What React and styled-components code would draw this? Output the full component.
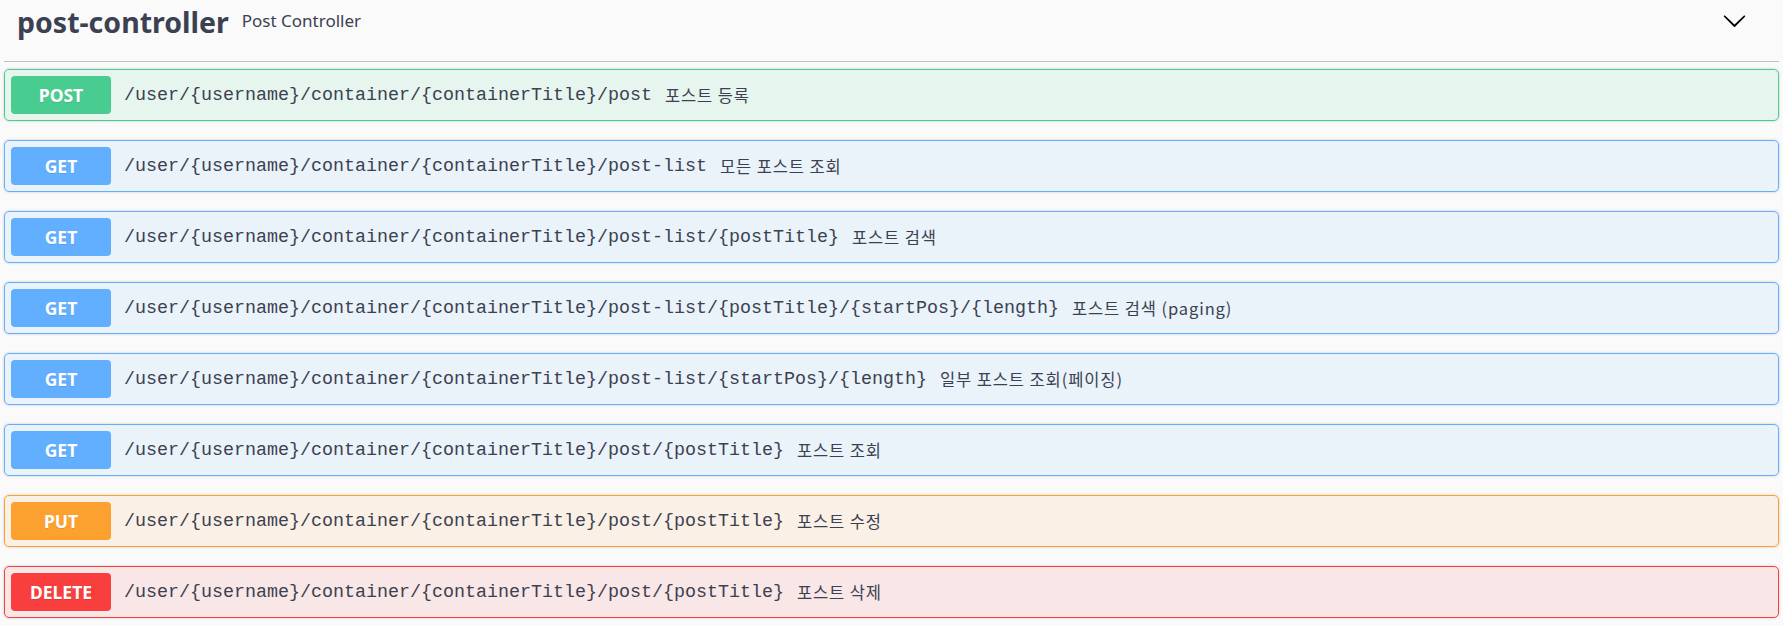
import React from "react";
import styled, { createGlobalStyle } from "styled-components";

const GlobalStyle = createGlobalStyle`
  html, body { margin: 0; padding: 0; background: #fafafa; }
  body { font-family: "Noto Sans", "Noto Sans CJK KR", sans-serif; color: #3b4151; }
  * { box-sizing: border-box; }
`;

const METHODS = {
  post: { color: "#49cc90", bg: "rgba(73,204,144,.1)" },
  get: { color: "#61affe", bg: "rgba(97,175,254,.1)" },
  put: { color: "#fca130", bg: "rgba(252,161,48,.1)" },
  delete: { color: "#f93e3e", bg: "rgba(249,62,62,.1)" },
};

const Wrapper = styled.div`
  padding: 0 4px;
`;

const TagHeader = styled.div`
  display: flex;
  align-items: flex-start;
  height: 62px;
  padding: 3px 32px 0 13px;
  border-bottom: 1px solid rgba(59, 65, 81, 0.3);
  margin-bottom: 7px;
`;

const TagTitle = styled.h3`
  margin: 0;
  font-family: "Noto Sans", sans-serif;
  font-weight: 700;
  font-size: 28.5px;
  line-height: 39px;
  color: #3b4151;
`;

const TagSmall = styled.small`
  flex: 1;
  padding: 0 13px;
  margin-top: 6px;
  font-family: "Noto Sans", sans-serif;
  font-size: 17px;
  line-height: 23px;
  font-weight: 400;
  color: #3b4151;
`;

const Arrow = styled.svg`
  width: 25px;
  height: 25px;
  margin-top: 4.6px;
  flex: none;
`;

const OpBlock = styled.div`
  display: flex;
  align-items: center;
  height: 52px;
  padding: 0 6px;
  margin-bottom: 19px;
  border: 1px solid ${(p) => METHODS[p.$method].color};
  background: ${(p) => METHODS[p.$method].bg};
  border-radius: 5px;
  box-shadow: 0 0 3px rgba(0, 0, 0, 0.19);
`;

const Method = styled.span`
  flex: none;
  display: flex;
  align-items: center;
  justify-content: center;
  min-width: 100px;
  height: 38px;
  border-radius: 4px;
  background: ${(p) => METHODS[p.$method].color};
  color: #fff;
  font-family: "Noto Sans", sans-serif;
  font-weight: 700;
  font-size: 17.5px;
  text-shadow: 0 1px 0 rgba(0, 0, 0, 0.1);
`;

const Path = styled.span`
  padding: 0 13px 0 13px;
  font-family: "Liberation Mono", monospace;
  font-size: 18.33px;
  font-weight: 400;
  color: #3b4151;
  white-space: nowrap;
`;

const Description = styled.span`
  flex: 1 1 auto;
  font-family: "Noto Sans CJK KR", "Noto Sans", sans-serif;
  font-size: 16.5px;
  letter-spacing: 0.9px;
  color: #3b4151;
  white-space: nowrap;
`;

const ops = [
  { m: "post", path: "/user/{username}/container/{containerTitle}/post", desc: "포스트 등록" },
  { m: "get", path: "/user/{username}/container/{containerTitle}/post-list", desc: "모든 포스트 조회" },
  { m: "get", path: "/user/{username}/container/{containerTitle}/post-list/{postTitle}", desc: "포스트 검색" },
  { m: "get", path: "/user/{username}/container/{containerTitle}/post-list/{postTitle}/{startPos}/{length}", desc: "포스트 검색 (paging)" },
  { m: "get", path: "/user/{username}/container/{containerTitle}/post-list/{startPos}/{length}", desc: "일부 포스트 조회(페이징)" },
  { m: "get", path: "/user/{username}/container/{containerTitle}/post/{postTitle}", desc: "포스트 조회" },
  { m: "put", path: "/user/{username}/container/{containerTitle}/post/{postTitle}", desc: "포스트 수정" },
  { m: "delete", path: "/user/{username}/container/{containerTitle}/post/{postTitle}", desc: "포스트 삭제" },
];

export default function App() {
  return (
    <>
      <GlobalStyle />
      <Wrapper>
        <TagHeader>
          <TagTitle>post-controller</TagTitle>
          <TagSmall>Post Controller</TagSmall>
          <Arrow viewBox="0 0 20 20">
            <path
              fill="#000"
              d="M17.418 6.109c.272-.268.709-.268.979 0s.271.701 0 .969l-7.908 7.83c-.27.268-.707.268-.979 0l-7.908-7.83c-.27-.268-.27-.701 0-.969.271-.268.709-.268.979 0L10 13.25l7.418-7.141z"
            />
          </Arrow>
        </TagHeader>
        {ops.map((o, i) => (
          <OpBlock key={i} $method={o.m}>
            <Method $method={o.m}>{o.m.toUpperCase()}</Method>
            <Path>{o.path}</Path>
            <Description>{o.desc}</Description>
          </OpBlock>
        ))}
      </Wrapper>
    </>
  );
}
